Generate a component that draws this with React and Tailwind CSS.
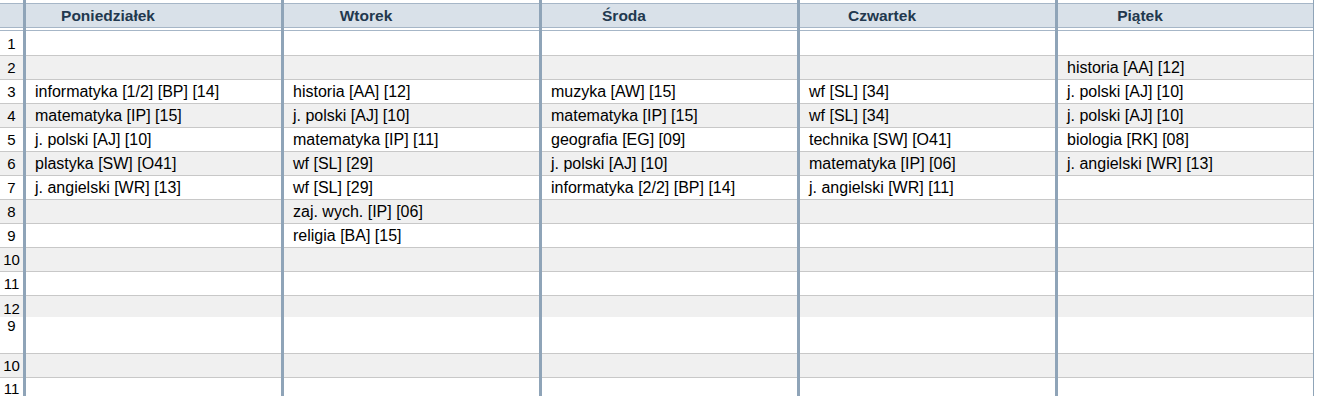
import React from "react";

const DAYS = ["Poniedziałek", "Wtorek", "Środa", "Czwartek", "Piątek"];

const DATA = {
  0: { 3: "informatyka [1/2] [BP] [14]", 4: "matematyka [IP] [15]", 5: "j. polski [AJ] [10]", 6: "plastyka [SW] [O41]", 7: "j. angielski [WR] [13]" },
  1: { 3: "historia [AA] [12]", 4: "j. polski [AJ] [10]", 5: "matematyka [IP] [11]", 6: "wf [SL] [29]", 7: "wf [SL] [29]", 8: "zaj. wych. [IP] [06]", 9: "religia [BA] [15]" },
  2: { 3: "muzyka [AW] [15]", 4: "matematyka [IP] [15]", 5: "geografia [EG] [09]", 6: "j. polski [AJ] [10]", 7: "informatyka [2/2] [BP] [14]" },
  3: { 3: "wf [SL] [34]", 4: "wf [SL] [34]", 5: "technika [SW] [O41]", 6: "matematyka [IP] [06]", 7: "j. angielski [WR] [11]" },
  4: { 2: "historia [AA] [12]", 3: "j. polski [AJ] [10]", 4: "j. polski [AJ] [10]", 5: "biologia [RK] [08]", 6: "j. angielski [WR] [13]" },
};

const ROWS = [
  { label: "1", key: 1, gray: false, kind: "n" },
  { label: "2", key: 2, gray: true, kind: "n" },
  { label: "3", key: 3, gray: false, kind: "n" },
  { label: "4", key: 4, gray: true, kind: "n" },
  { label: "5", key: 5, gray: false, kind: "n" },
  { label: "6", key: 6, gray: true, kind: "n" },
  { label: "7", key: 7, gray: false, kind: "n" },
  { label: "8", key: 8, gray: true, kind: "n" },
  { label: "9", key: 9, gray: false, kind: "n" },
  { label: "10", key: 10, gray: true, kind: "n" },
  { label: "11", key: 11, gray: false, kind: "n" },
  { label: "12", key: 12, gray: true, kind: "short" },
  { label: "9", key: 13, gray: false, kind: "tall" },
  { label: "10", key: 14, gray: true, kind: "n" },
  { label: "11", key: 15, gray: false, kind: "last" },
];

function rowClasses(row) {
  const bg = row.gray ? "bg-[#f0f0f0]" : "bg-white";
  if (row.kind === "short") return `${bg} h-[21px]`;
  if (row.kind === "tall") return `${bg} h-[37px] border-b border-[#c8c8c8]`;
  if (row.kind === "last") return `${bg} h-[19px]`;
  return `${bg} h-[24px] border-b border-[#c8c8c8]`;
}

function numAlign(row) {
  if (row.kind === "short") return "items-end";
  if (row.kind === "tall") return "items-start";
  if (row.kind === "last") return "items-end";
  return "items-center";
}

function HeaderCell({ children, day }) {
  return (
    <div className={day ? "border-l-[3px] border-[#8fa4b8]" : ""}>
      <div className="h-[3px] bg-white" />
      <div className="h-[25px] border-y border-[#a6b6c7] bg-[#d9e1e9] flex items-center">
        {children}
      </div>
      <div className="h-[2px] bg-white" />
      <div className="h-[1px] bg-[#a6b6c7]" />
      <div className="h-[1px] bg-white" />
    </div>
  );
}

export default function App() {
  return (
    <div
      className="w-[1317px] h-[396px] overflow-hidden bg-white text-black"
      style={{ fontFamily: '"Liberation Sans", Arial, sans-serif' }}
    >
      <div className="grid grid-cols-[23px_258px_258px_258px_258px_259px]">
        <HeaderCell />
        {DAYS.map((d, i) => (
          <div key={d} className={i === 4 ? "border-r border-[#8fa4b8]" : ""}>
            <HeaderCell day>
              <div className="w-[164px] text-center text-[15.5px] font-bold text-[#22384e] leading-none">
                {d}
              </div>
            </HeaderCell>
          </div>
        ))}

        {ROWS.map((row) => (
          <React.Fragment key={row.key}>
            <div className={`${rowClasses(row)} flex justify-center ${numAlign(row)} text-[15px] leading-[17px]`}>
              {row.label}
            </div>
            {DAYS.map((d, i) => (
              <div
                key={d}
                className={`border-l-[3px] border-[#8fa4b8] ${i === 4 ? "border-r" : ""}`}
              >
                <div className={`${rowClasses(row)} flex items-center pl-[9px] text-[16px] whitespace-nowrap`}>
                  {row.key <= 12 ? DATA[i][row.key] || "" : ""}
                </div>
              </div>
            ))}
          </React.Fragment>
        ))}
      </div>
    </div>
  );
}
